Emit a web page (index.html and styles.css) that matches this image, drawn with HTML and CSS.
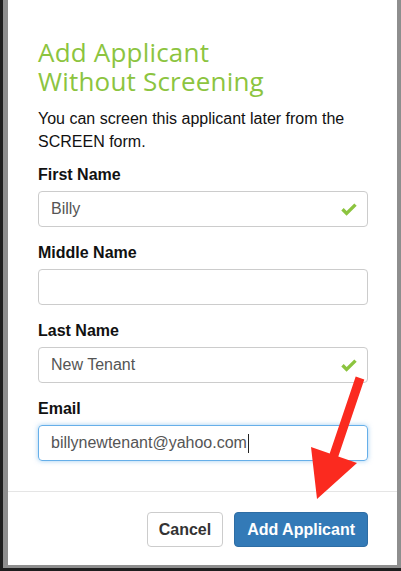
FILE: index.html
```html
<!DOCTYPE html>
<html>
<head>
<meta charset="utf-8">
<link rel="stylesheet" href="styles.css">
</head>
<body>
<div class="frame">
  <div class="modal">
    <div class="modal-body">
      <h1 class="title"><span class="title-line">Add Applicant</span><span class="title-line">Without Screening</span></h1>
      <p class="intro">You can screen this applicant later from the SCREEN form.</p>
      <div class="group">
        <label class="label">First Name</label>
        <div class="input valid"><span class="value">Billy</span>
          <svg class="check" width="16" height="13" viewBox="0 0 16 13"><path d="M1.5 6.2 L5.6 10.4 L14.5 1.6" fill="none" stroke="#8cc43f" stroke-width="3.4"/></svg>
        </div>
      </div>
      <div class="group">
        <label class="label">Middle Name</label>
        <div class="input"></div>
      </div>
      <div class="group">
        <label class="label">Last Name</label>
        <div class="input valid"><span class="value">New Tenant</span>
          <svg class="check" width="16" height="13" viewBox="0 0 16 13"><path d="M1.5 6.2 L5.6 10.4 L14.5 1.6" fill="none" stroke="#8cc43f" stroke-width="3.4"/></svg>
        </div>
      </div>
      <div class="group last">
        <label class="label">Email</label>
        <div class="input focus"><span class="value">billynewtenant@yahoo.com</span><span class="caret"></span></div>
      </div>
    </div>
    <div class="modal-footer">
      <button class="btn btn-default">Cancel</button>
      <button class="btn btn-primary">Add Applicant</button>
    </div>
  </div>
</div>
<svg class="arrow" width="401" height="571" viewBox="0 0 401 571"><polygon points="355.7,376.6 364.3,379.4 338.3,456.4 357,463 317,499 311,447 329.7,453.6" fill="#fb2a1f"/></svg>
</body>
</html>
```
FILE: styles.css
```css
html, body {
  margin: 0;
  padding: 0;
}
body {
  width: 401px;
  height: 571px;
  overflow: hidden;
  background: #1e1e1e;
  font-family: "Liberation Sans", Arial, sans-serif;
  position: relative;
}
.frame {
  margin-left: 3px;
  background: #8e8e8e;
  padding: 0 4px 3px 5px;
}
.modal {
  background: #fff;
  height: 565px;
  display: flex;
  flex-direction: column;
}
.modal-body {
  padding: 38px 29px 14px 30px;
}
.title {
  margin: 0;
  font-family: "Open Sans", sans-serif;
  font-weight: 500;
  font-size: 26px;
  color: #8cc43f;
  letter-spacing: 0.2px;
  display: flex;
  flex-direction: column;
}
.title-line {
  display: block;
  height: 29px;
  line-height: 29px;
}
.intro {
  margin: 12px 0 12px;
  font-size: 16px;
  line-height: 22.5px;
  color: #111;
}
.group {
  margin-bottom: 16px;
}
.label {
  display: block;
  font-weight: bold;
  font-size: 16px;
  line-height: 20px;
  color: #111;
  margin-bottom: 6px;
}
.input {
  box-sizing: border-box;
  height: 36px;
  border: 1px solid #ccc;
  border-radius: 4px;
  padding: 0 12px;
  display: flex;
  align-items: center;
  font-size: 16px;
  color: #555;
  position: relative;
}
.input.focus {
  border-color: #66afe9;
  box-shadow: 0 0 5px rgba(102, 175, 233, 0.6);
}
.caret {
  width: 1px;
  height: 19px;
  background: #222;
  margin-left: 1px;
}
.check {
  position: absolute;
  right: 10px;
  top: 11px;
}
.modal-footer {
  border-top: 1px solid #e5e5e5;
  padding: 20px 29px 18px 30px;
  display: flex;
  justify-content: flex-end;
  gap: 11px;
}
.btn {
  box-sizing: border-box;
  height: 35px;
  padding: 0 11px;
  border-radius: 4px;
  font-family: "Liberation Sans", Arial, sans-serif;
  font-weight: bold;
  font-size: 16px;
  border: 1px solid #ccc;
  background: #fff;
  color: #333;
}
.btn-primary {
  background: #337ab7;
  border-color: #2e6da4;
  color: #fff;
  padding: 0 12px;
}
.arrow {
  position: absolute;
  left: 0;
  top: 0;
}
```
